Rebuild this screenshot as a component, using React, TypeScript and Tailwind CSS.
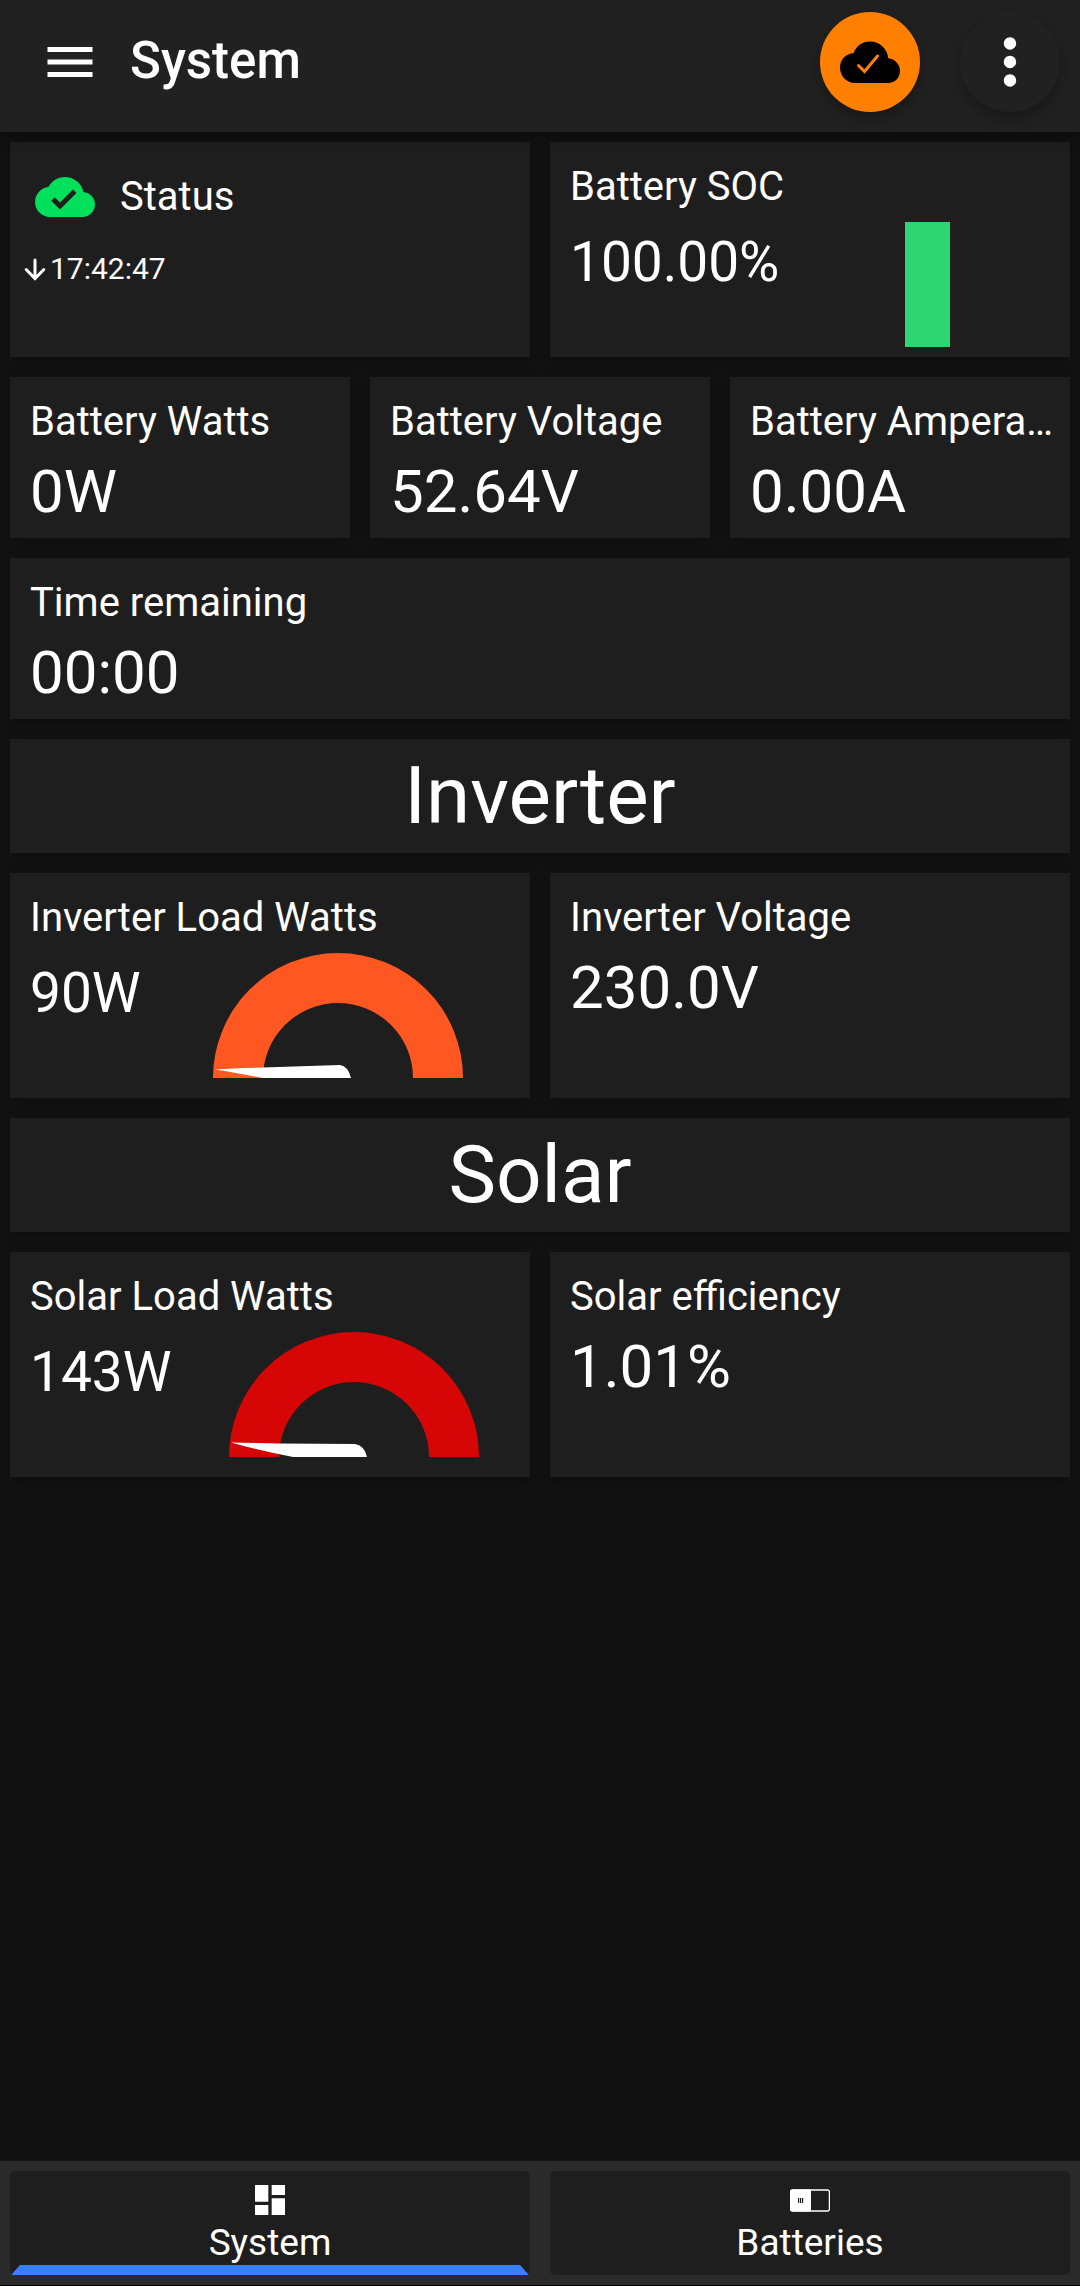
import React from 'react';
import { MdCloudDone, MdDashboard, MdMenu, MdMoreVert } from 'react-icons/md';
import { clsx } from 'clsx';

interface CardProps {
  className?: string;
  children: React.ReactNode;
}

function Card({ className, children }: CardProps) {
  return (
    <section
      className={clsx(
        'min-w-0 bg-[#1e1e1e] shadow-[0_4px_12px_rgba(0,0,0,0.3)]',
        className
      )}
    >
      {children}
    </section>
  );
}

function CardTitle({ children }: { children: React.ReactNode }) {
  return <h3 className="truncate pr-2 pl-5 text-[40px] leading-[50px]">{children}</h3>;
}

function StatCard({ title, value }: { title: string; value: string }) {
  return (
    <Card className="pt-5 pb-[11px]">
      <CardTitle>{title}</CardTitle>
      <p className="mt-[10px] px-5 text-6xl leading-[70px]">{value}</p>
    </Card>
  );
}

interface ChartCardProps {
  title: string;
  value: string;
  className?: string;
  children: React.ReactNode;
}

function ChartCard({ title, value, className, children }: ChartCardProps) {
  return (
    <Card className={clsx('pt-5', className)}>
      <CardTitle>{title}</CardTitle>
      <div className="mt-[10px] flex">
        <p className="mt-2 mr-[6px] ml-5 text-[55px] leading-16">{value}</p>
        <div className="flex flex-1 justify-center">{children}</div>
      </div>
    </Card>
  );
}

function SectionCard({ children }: { children: React.ReactNode }) {
  return (
    <Card className="py-[10px]">
      <h2 className="text-center text-[80px] leading-[94px]">{children}</h2>
    </Card>
  );
}

interface GaugeProps {
  color: string;
  needle: string;
}

function Gauge({ color, needle }: GaugeProps) {
  return (
    <svg width="250" height="125" viewBox="0 0 250 125" aria-hidden="true">
      <path d="M0 125a125 125 0 0 1 250 0h-50a75 75 0 0 0-150 0z" fill={color} />
      <path d={needle} fill="#fff" />
    </svg>
  );
}

function ArrowDownIcon() {
  return (
    <svg width="30" height="36" viewBox="0 0 30 36" aria-hidden="true">
      <path
        d="M15 9v18M6.200 18.500L15 27.500l8.800-9"
        fill="none"
        stroke="currentColor"
        strokeWidth="3"
        strokeLinecap="round"
      />
    </svg>
  );
}

function CloudCheckIcon() {
  return (
    <svg width="60" height="60" viewBox="0 0 60 60" aria-hidden="true">
      <path
        d="M48.200 26.300C47.500 16.500 39.500 9.500 30 9.500c-7.500 0-14 4.500-16.300 11.400C6 21.500 0 27.500 0 35.500 0 44 6.500 51 15 51h33c7 0 12-5.500 12-12 0-6.500-5-12-11.800-12.700z"
        fill="#000"
      />
      <path
        d="M18.500 33.500l6 6L37.500 24"
        fill="none"
        stroke="#ff8000"
        strokeWidth="3"
        strokeLinecap="round"
        strokeLinejoin="miter"
      />
    </svg>
  );
}

function BatteryIcon() {
  return (
    <svg width="40" height="40" viewBox="0 0 40 40" aria-hidden="true">
      <rect x="0.600" y="10" width="38.800" height="21" rx="2" fill="none" stroke="#fff" strokeWidth="1.300" />
      <path d="M2 9.500h19v22H2a2 2 0 0 1-2-2v-18a2 2 0 0 1 2-2z" fill="#fff" />
      <path d="M8 18h1.200v5H8zM10 18h1.200v5H10zM12 18h1.200v5H12z" fill="#1e1e1e" />
    </svg>
  );
}

function Navbar() {
  return (
    <header className="z-10 flex h-33 items-start bg-[#212121] pt-3 pr-5 pl-10 shadow-[0_4px_12px_rgba(0,0,0,0.4)]">
      <button aria-label="Menu" className="flex h-25 items-center">
        <MdMenu size={60} />
      </button>
      <h1 className="ml-[30px] flex-1 text-[51px] leading-[98px] font-medium">System</h1>
      <div className="flex gap-10">
        <button
          aria-label="Connection"
          className="flex size-25 items-center justify-center rounded-full bg-[#ff8000] shadow-[0_6px_16px_rgba(0,0,0,0.3)]"
        >
          <CloudCheckIcon />
        </button>
        <button
          aria-label="More"
          className="flex size-25 items-center justify-center rounded-full bg-[#212121] shadow-[0_6px_16px_rgba(0,0,0,0.3)]"
        >
          <MdMoreVert size={74} />
        </button>
      </div>
    </header>
  );
}

interface TabProps {
  label: string;
  icon: React.ReactNode;
  active?: boolean;
}

function Tab({ label, icon, active }: TabProps) {
  return (
    <button
      aria-pressed={active}
      className="relative flex h-26 flex-col items-center rounded-[5px] bg-[#1e1e1e] pt-[9px]"
    >
      {icon}
      <span className="text-[37px] leading-[46px]">{label}</span>
      {active && (
        <span className="absolute inset-x-px bottom-0 h-[10px] rounded-b-xs bg-[#3880ff] [clip-path:polygon(9px_0,calc(100%-9px)_0,100%_100%,0_100%)]" />
      )}
    </button>
  );
}

export default function App() {
  return (
    <div className="flex min-h-screen flex-col bg-[#121212] font-[Roboto,sans-serif] text-white">
      <Navbar />

      <main className="flex flex-1 flex-col gap-5 p-[10px]">
        <div className="grid grid-cols-2 gap-5">
          <Card>
            <div className="flex items-center gap-[25px] pt-[25px] pl-[25px]">
              <MdCloudDone size={60} className="text-[#00e05a]" />
              <h3 className="text-[40px] leading-[50px]">Status</h3>
            </div>
            <p className="mt-6 flex items-center pl-[10px] text-[30px] leading-9">
              <ArrowDownIcon />
              17:42:47
            </p>
          </Card>
          <ChartCard title="Battery SOC" value="100.00%" className="pb-[10px]">
            <div className="h-[125px] w-[45px] bg-[#2dd573]" />
          </ChartCard>
        </div>

        <div className="grid grid-cols-3 gap-5">
          <StatCard title="Battery Watts" value="0W" />
          <StatCard title="Battery Voltage" value="52.64V" />
          <StatCard title="Battery Amperage" value="0.00A" />
        </div>

        <StatCard title="Time remaining" value="00:00" />

        <SectionCard>Inverter</SectionCard>

        <div className="grid grid-cols-2 gap-5">
          <ChartCard title="Inverter Load Watts" value="90W" className="pb-5">
            <Gauge
              color="#ff5722"
              needle="M2 116.500Q20 115 50 114.500L127 112q8 1 11 13H50Q30 121 2 116.500z"
            />
          </ChartCard>
          <StatCard title="Inverter Voltage" value="230.0V" />
        </div>

        <SectionCard>Solar</SectionCard>

        <div className="grid grid-cols-2 gap-5">
          <ChartCard title="Solar Load Watts" value="143W" className="pb-5">
            <Gauge
              color="#d60606"
              needle="M2 110.500L50 111.500l76 .5q9 1 12 13H64Q32 119 2 110.500z"
            />
          </ChartCard>
          <StatCard title="Solar efficiency" value="1.01%" />
        </div>
      </main>

      <nav className="grid grid-cols-2 gap-5 border-b border-black bg-[#2a2a2a] p-[10px]">
        <Tab label="System" icon={<MdDashboard size={40} />} active />
        <Tab label="Batteries" icon={<BatteryIcon />} />
      </nav>
    </div>
  );
}
